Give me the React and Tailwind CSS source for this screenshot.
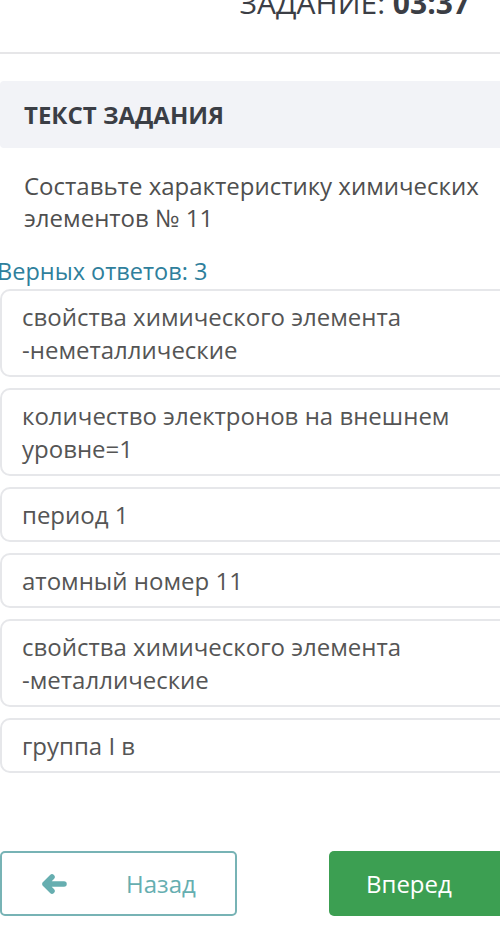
const answers = [
  "свойства химического элемента -неметаллические",
  "количество электронов на внешнем уровне=1",
  "период 1",
  "атомный номер 11",
  "свойства химического элемента -металлические",
  "группа I в",
];

function ArrowLeft() {
  return (
    <svg viewBox="0 0 26 20" className="ml-[39px] w-[26px] h-[20px]" fill="none">
      <path d="M4 10H23M11 3L4 10L11 17" stroke="currentColor" strokeWidth="5.5" strokeLinecap="round" strokeLinejoin="round" />
    </svg>
  );
}

export default function App() {
  return (
    <div
      className="w-[500px] h-[942px] overflow-hidden bg-white text-[#4d4d4d]"
      style={{ fontFamily: '"Open Sans", "Liberation Sans", sans-serif' }}
    >
      {/* шапка с таймером */}
      <div className="h-[52px] flex justify-end pr-[30px]">
        <div className="text-[30px] leading-[30px] mt-[-12px] text-[#3b3e45] whitespace-nowrap">
          ЗАДАНИЕ: <span className="font-bold">03:37</span>
        </div>
      </div>
      <div className="h-[2px] bg-[#e6e6e8]" />

      <div className="mt-[27px] bg-[#f2f3f7] rounded-l-[4px] h-[67px] flex items-center pl-[24px]">
        <span className="text-[24px] font-bold text-[#3b3e45]">ТЕКСТ ЗАДАНИЯ</span>
      </div>

      <div className="pl-[24px] pr-[10px] pt-[22px] text-[24px] leading-[32px] text-[#4f4f4f]">
        Составьте характеристику химических элементов № 11
      </div>

      <div className="mt-[23px] text-[23.5px] leading-[28px] text-[#2f7f9c] -ml-[3px] whitespace-nowrap">
        Верных ответов: 3
      </div>

      <div className="flex flex-col gap-[11px] mt-[4px] w-[520px]">
        {answers.map((a) => (
          <div
            key={a}
            className="border-2 border-[#e6e7ea] rounded-[10px] pl-[20px] pr-[60px] py-[9px] text-[24px] leading-[33px] text-[#555]"
          >
            {a}
          </div>
        ))}
      </div>

      <div className="mt-[78px] flex justify-between">
        <button className="w-[237px] h-[65px] border-2 border-[#77b3b5] rounded-[5px] flex items-center text-[#66aeb0]">
          <ArrowLeft />
          <span className="ml-[59px] text-[24px]">Назад</span>
        </button>
        <button className="w-[180px] -mr-[9px] h-[65px] bg-[#3c9f52] rounded-[5px] text-white text-[24px] flex items-center pl-[37px]">
          Вперед
        </button>
      </div>
    </div>
  );
}
